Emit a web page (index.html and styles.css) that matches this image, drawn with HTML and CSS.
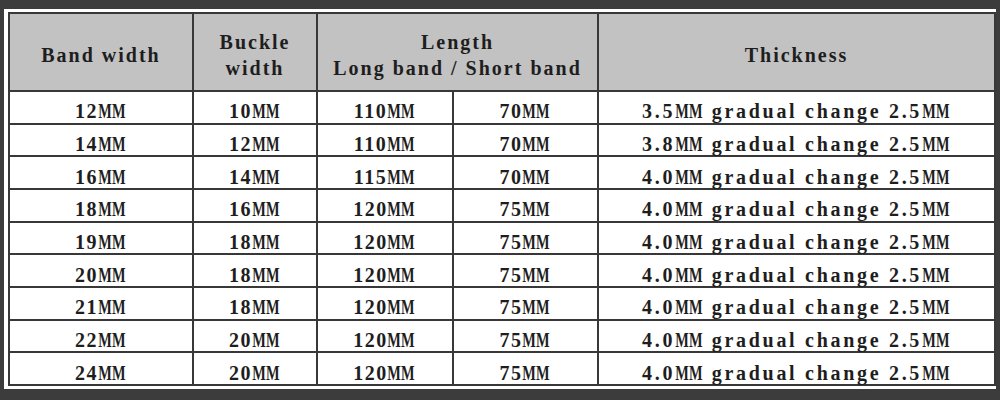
FILE: index.html
```html
<!DOCTYPE html>
<html>
<head>
<meta charset="utf-8">
<link rel="stylesheet" href="styles.css">
</head>
<body>
<div class="panel">
<table class="sizes">
<colgroup>
<col class="c1"><col class="c2"><col class="c3"><col class="c4"><col class="c5">
</colgroup>
<thead>
<tr>
<th>Band width</th>
<th>Buckle<br>width</th>
<th colspan="2">Length<br>Long band / Short band</th>
<th>Thickness</th>
</tr>
</thead>
<tbody>
<tr><td>12<span class="u">MM</span></td><td>10<span class="u">MM</span></td><td>110<span class="u">MM</span></td><td>70<span class="u">MM</span></td><td class="thick">3.5<span class="u">MM</span> gradual change 2.5<span class="u">MM</span></td></tr>
<tr><td>14<span class="u">MM</span></td><td>12<span class="u">MM</span></td><td>110<span class="u">MM</span></td><td>70<span class="u">MM</span></td><td class="thick">3.8<span class="u">MM</span> gradual change 2.5<span class="u">MM</span></td></tr>
<tr><td>16<span class="u">MM</span></td><td>14<span class="u">MM</span></td><td>115<span class="u">MM</span></td><td>70<span class="u">MM</span></td><td class="thick">4.0<span class="u">MM</span> gradual change 2.5<span class="u">MM</span></td></tr>
<tr><td>18<span class="u">MM</span></td><td>16<span class="u">MM</span></td><td>120<span class="u">MM</span></td><td>75<span class="u">MM</span></td><td class="thick">4.0<span class="u">MM</span> gradual change 2.5<span class="u">MM</span></td></tr>
<tr><td>19<span class="u">MM</span></td><td>18<span class="u">MM</span></td><td>120<span class="u">MM</span></td><td>75<span class="u">MM</span></td><td class="thick">4.0<span class="u">MM</span> gradual change 2.5<span class="u">MM</span></td></tr>
<tr><td>20<span class="u">MM</span></td><td>18<span class="u">MM</span></td><td>120<span class="u">MM</span></td><td>75<span class="u">MM</span></td><td class="thick">4.0<span class="u">MM</span> gradual change 2.5<span class="u">MM</span></td></tr>
<tr><td>21<span class="u">MM</span></td><td>18<span class="u">MM</span></td><td>120<span class="u">MM</span></td><td>75<span class="u">MM</span></td><td class="thick">4.0<span class="u">MM</span> gradual change 2.5<span class="u">MM</span></td></tr>
<tr><td>22<span class="u">MM</span></td><td>20<span class="u">MM</span></td><td>120<span class="u">MM</span></td><td>75<span class="u">MM</span></td><td class="thick">4.0<span class="u">MM</span> gradual change 2.5<span class="u">MM</span></td></tr>
<tr><td>24<span class="u">MM</span></td><td>20<span class="u">MM</span></td><td>120<span class="u">MM</span></td><td>75<span class="u">MM</span></td><td class="thick">4.0<span class="u">MM</span> gradual change 2.5<span class="u">MM</span></td></tr>
</tbody>
</table>
</div>
</body>
</html>
```
FILE: styles.css
```css
html, body {
  margin: 0;
  padding: 0;
  background: #3c3c3c;
}
.panel {
  margin: 9px 4px 0 4px;
  width: 992px;
  height: 380px;
  box-sizing: border-box;
  padding: 3px 2px 3px 4px;
  background: #ffffff;
}
.sizes {
  border-collapse: collapse;
  table-layout: fixed;
  width: 986px;
  height: 374px;
  font-family: "Liberation Serif", "Times New Roman", serif;
  font-weight: bold;
  color: #1e1e1e;
}
.c1 { width: 184px; }
.c2 { width: 124px; }
.c3 { width: 136px; }
.c4 { width: 145px; }
.c5 { width: 397px; }
.sizes th,
.sizes td {
  border: 2px solid #383838;
  text-align: center;
  vertical-align: middle;
}
.sizes th {
  background: #c2c2c2;
  height: 70px;
  padding: 6px 0 0 0;
  line-height: 26px;
  font-size: 20px;
  letter-spacing: 2px;
  font-weight: bold;
}
.sizes td {
  height: 22px;
  padding: 8px 0 0 0;
  line-height: 22px;
  font-size: 20px;
  letter-spacing: 1.5px;
}
.sizes td.thick {
  letter-spacing: 2.7px;
}
.u {
  display: inline-block;
  letter-spacing: 0;
  transform: scaleX(0.72);
  margin: 0 -3.5px 0 -5.3px;
}
```
